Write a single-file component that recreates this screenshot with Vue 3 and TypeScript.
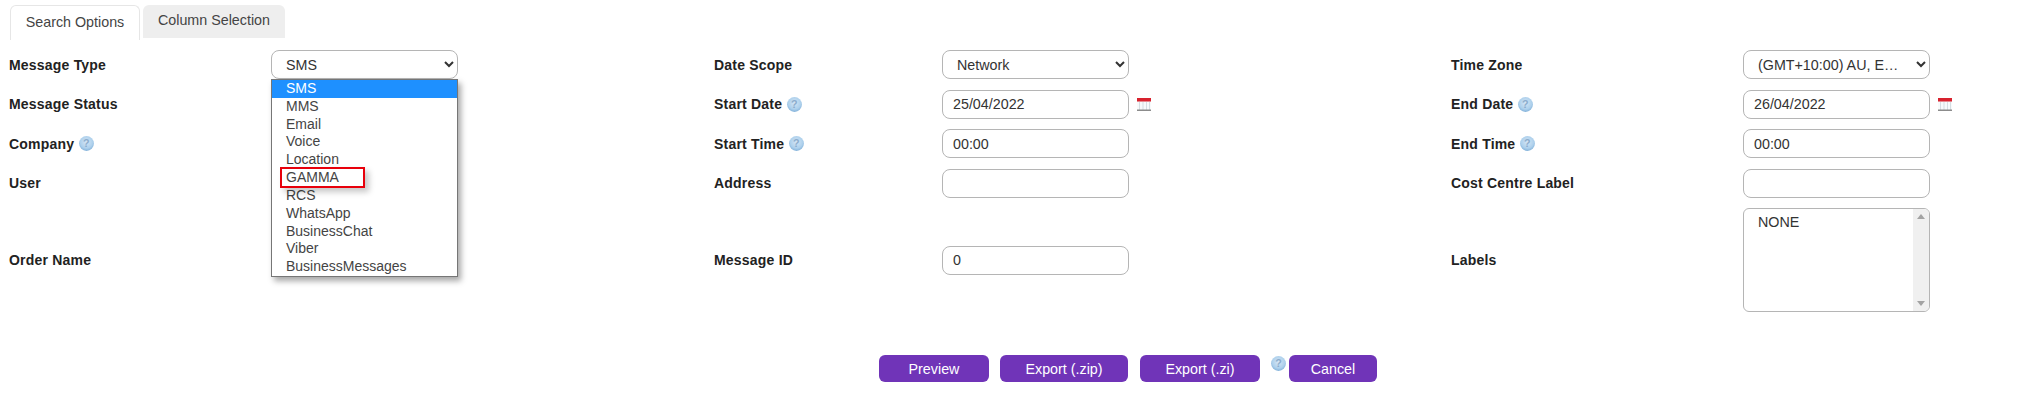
<template>
  <div class="page">
    <div class="tabs">
      <div class="tab active">Search Options</div>
      <div class="tab">Column Selection</div>
    </div>

    <div class="form">
      <div class="type-picker">
        <ul class="dropdown">
          <li v-for="(item, i) in messageTypes" :key="item" :class="{ selected: i === 0 }">{{ item }}</li>
        </ul>
        <div class="highlight"></div>
      </div>

      <template v-for="row in rows" :key="row.left.label">
        <template v-for="field in [row.left, row.middle, row.right]" :key="field.label">
          <div class="label">
            <span>{{ field.label }}</span>
            <svg v-if="field.help" class="help" viewBox="0 0 14 14">
              <use href="#help-icon" />
            </svg>
          </div>
          <div class="control">
            <select v-if="field.kind === 'select'" class="field select">
              <option>{{ field.value }}</option>
            </select>
            <div v-else-if="field.kind === 'list'" class="listbox">
              <div class="list-body">{{ field.value }}</div>
              <div class="scrollbar">
                <svg viewBox="0 0 16 16"><path d="M4 10 8 5 12 10Z" fill="#a3a3a3" /></svg>
                <svg viewBox="0 0 16 16"><path d="M4 6 8 11 12 6Z" fill="#a3a3a3" /></svg>
              </div>
            </div>
            <input v-else class="field input" type="text" :value="field.value" />
            <svg v-if="field.calendar" class="calendar" viewBox="0 0 14 13">
              <rect x="0" y="0" width="14" height="13" fill="#f7fafb" />
              <rect x="0" y="0" width="14" height="3" fill="#d8222e" />
              <rect x="0" y="3" width="14" height="1" fill="#e58a90" />
              <path d="M2.5 4V12M6 4V12M9.5 4V12M12.5 4V12" stroke="#d5dde2" stroke-width="1" fill="none" />
              <rect x="0" y="11.5" width="14" height="1.5" fill="#8c8c8c" />
            </svg>
          </div>
        </template>
      </template>
    </div>

    <div class="actions">
      <button class="btn preview">Preview</button>
      <button class="btn zip">Export (.zip)</button>
      <button class="btn zi">Export (.zi)</button>
      <svg class="help action-help" viewBox="0 0 14 14"><use href="#help-icon" /></svg>
      <button class="btn cancel">Cancel</button>
    </div>

    <svg class="defs" width="0" height="0">
      <defs>
        <radialGradient id="help-fill" cx="50%" cy="40%" r="60%">
          <stop offset="0%" stop-color="#d6e6f5" />
          <stop offset="70%" stop-color="#add0ec" />
          <stop offset="100%" stop-color="#83b2da" />
        </radialGradient>
        <symbol id="help-icon" viewBox="0 0 14 14">
          <circle cx="7" cy="7" r="6.9" fill="url(#help-fill)" />
          <text x="7" y="10.5" text-anchor="middle" font-size="10" font-weight="700" fill="#8cadcd" font-family="Liberation Sans, Arial, sans-serif">?</text>
        </symbol>
      </defs>
    </svg>
  </div>
</template>

<script setup lang="ts">
interface Field {
  label: string
  kind: 'select' | 'input' | 'list'
  value: string
  help?: boolean
  calendar?: boolean
}

interface Row {
  left: Field
  middle: Field
  right: Field
}

const messageTypes = [
  'SMS', 'MMS', 'Email', 'Voice', 'Location', 'GAMMA',
  'RCS', 'WhatsApp', 'BusinessChat', 'Viber', 'BusinessMessages',
]

const rows: Row[] = [
  {
    left: { label: 'Message Type', kind: 'select', value: 'SMS' },
    middle: { label: 'Date Scope', kind: 'select', value: 'Network' },
    right: { label: 'Time Zone', kind: 'select', value: '(GMT+10:00) AU, Eastern Standard Time' },
  },
  {
    left: { label: 'Message Status', kind: 'select', value: 'All' },
    middle: { label: 'Start Date', kind: 'input', value: '25/04/2022', help: true, calendar: true },
    right: { label: 'End Date', kind: 'input', value: '26/04/2022', help: true, calendar: true },
  },
  {
    left: { label: 'Company', kind: 'select', value: 'All', help: true },
    middle: { label: 'Start Time', kind: 'input', value: '00:00', help: true },
    right: { label: 'End Time', kind: 'input', value: '00:00', help: true },
  },
  {
    left: { label: 'User', kind: 'select', value: 'All' },
    middle: { label: 'Address', kind: 'input', value: '' },
    right: { label: 'Cost Centre Label', kind: 'input', value: '' },
  },
  {
    left: { label: 'Order Name', kind: 'input', value: '' },
    middle: { label: 'Message ID', kind: 'input', value: '0' },
    right: { label: 'Labels', kind: 'list', value: 'NONE' },
  },
]
</script>

<style>
html,
body {
  margin: 0;
  background: #fff;
}
</style>

<style scoped>
.page {
  width: 2018px;
  height: 401px;
  overflow: hidden;
  padding: 5px 0 0 9px;
  box-sizing: border-box;
  font-family: "Liberation Sans", Arial, sans-serif;
  font-size: 14.3px;
  color: #333;
}

.tabs {
  display: flex;
  align-items: flex-start;
  gap: 3px;
  height: 35px;
  margin-left: 1px;
}

.tab {
  height: 33px;
  width: 142px;
  text-align: center;
  line-height: 31px;
  background: #eee;
  border-radius: 6px 6px 0 0;
  color: #444;
  box-sizing: border-box;
}

.tab.active {
  height: 35px;
  width: 130px;
  line-height: 33px;
  background: #fff;
  border: 1px solid #e6e6e6;
  border-bottom: none;
}

.form {
  position: relative;
  display: grid;
  grid-template-columns: 262px 443px 228px 509px 292px 270px;
  grid-template-rows: repeat(4, 29px) 104px;
  row-gap: 10.5px;
  margin-top: 10px;
  align-items: center;
}

.label {
  display: flex;
  align-items: center;
  gap: 5px;
  font-weight: 700;
  font-size: 14px;
  letter-spacing: 0.2px;
  color: #222;
}

.control {
  display: flex;
  align-items: center;
  gap: 8px;
}

.field {
  box-sizing: border-box;
  height: 29px;
  border: 1px solid #b5b5b5;
  border-radius: 8px;
  background: #fff;
  font-family: inherit;
  font-size: 14.3px;
  color: #333;
  outline: none;
}

.input {
  width: 187px;
  padding: 0 10px;
}

.select {
  width: 187px;
  padding: 0 8px 0 10px;
  text-overflow: ellipsis;
}

.listbox {
  box-sizing: border-box;
  display: flex;
  width: 187px;
  height: 104px;
  border: 1px solid #b5b5b5;
  border-radius: 6px;
  overflow: hidden;
  background: #fff;
}

.list-body {
  flex: 1;
  padding: 0 14px;
  line-height: 27px;
  color: #333;
}

.scrollbar {
  display: flex;
  flex-direction: column;
  justify-content: space-between;
  width: 16px;
  background: #f0f0f0;
}

.scrollbar svg {
  width: 16px;
  height: 16px;
}

.calendar {
  width: 14px;
  height: 13px;
  margin-top: 1px;
}

.help {
  width: 15px;
  height: 15px;
  flex: none;
}

.type-picker {
  position: absolute;
  left: 262px;
  top: 29px;
  z-index: 2;
}

.dropdown {
  box-sizing: border-box;
  width: 187px;
  height: 198px;
  margin: 0;
  padding: 0;
  list-style: none;
  font-size: 14px;
  background: #fff;
  border: 1px solid #767676;
  box-shadow: 3px 4px 6px rgba(0, 0, 0, 0.35);
}

.dropdown li {
  height: 17.82px;
  line-height: 17px;
  padding-left: 14px;
  color: #444;
}

.dropdown li.selected {
  background: #1e90ff;
  color: #fff;
}

.highlight {
  position: absolute;
  left: 9px;
  top: 88px;
  box-sizing: border-box;
  width: 85px;
  height: 21px;
  border: 2px solid #e8000b;
  box-shadow: 4px 4px 6px rgba(0, 0, 0, 0.22);
}

.actions {
  display: flex;
  align-items: flex-start;
  margin: 43px 0 0 870px;
}

.btn {
  height: 27px;
  padding: 0;
  border: none;
  border-radius: 6px;
  background: #7034b8;
  color: #fff;
  font-family: inherit;
  font-size: 14.3px;
}

.preview {
  width: 110px;
  margin-right: 11px;
}

.zip {
  width: 128px;
  margin-right: 12px;
}

.zi {
  width: 120px;
  margin-right: 11px;
}

.action-help {
  margin: 1px 3px 0 0;
}

.cancel {
  width: 88px;
}

.defs {
  position: absolute;
}
</style>
